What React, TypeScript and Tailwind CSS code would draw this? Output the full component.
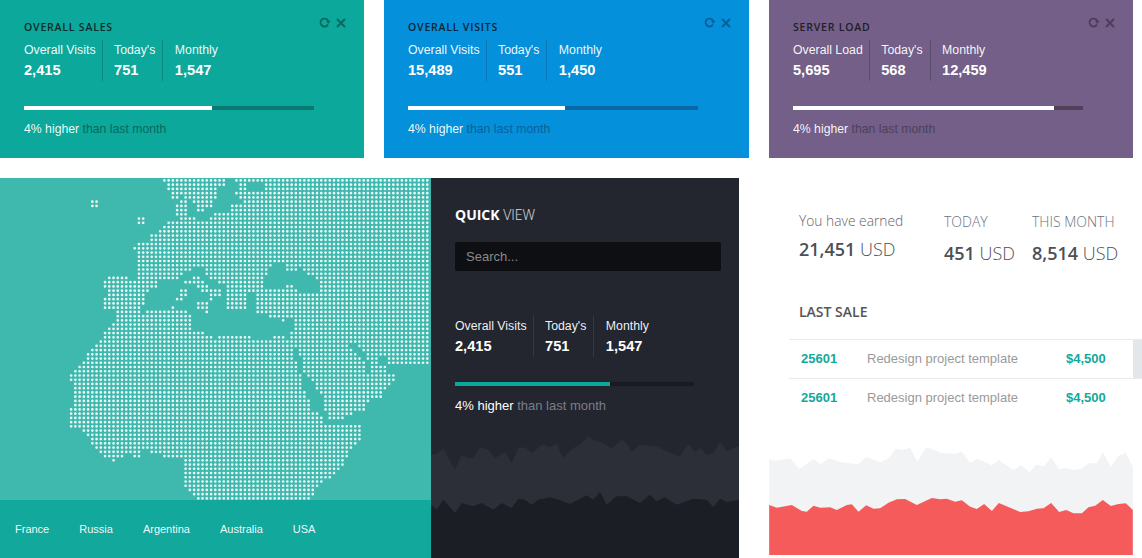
import { ReactNode } from 'react';

type Pt = [number, number];

const SANS = "font-['Liberation_Sans',Arial,sans-serif]";
const OPEN = "font-['Open_Sans',sans-serif]";

// outlines traced off the reference at 3x, y offset 175
const zoomed = (pts: Pt[]): Pt[] => pts.map(([x, y]) => [x / 3, y / 3 + 175 - 178]);
const real = (pts: Pt[]): Pt[] => pts.map(([x, y]) => [x, y - 178]);

const land: Pt[][] = [
  real([
    [233, 176], [432, 176], [432, 365], [388, 365], [386, 373], [394, 374], [398, 381], [389, 385], [381, 397],
    [369, 402], [366, 410], [353, 414], [344, 419], [329, 419], [329, 424], [351, 424], [361, 424], [361, 441],
    [350, 450], [347, 458], [344, 465], [338, 470], [333, 475], [328, 480], [318, 485], [314, 490], [311, 502],
    [197, 502], [192, 494], [188, 490], [184, 486], [184, 459], [163, 458], [162, 455], [150, 454], [149, 450],
    [141, 450], [140, 458], [133, 458], [133, 453], [124, 453], [124, 458], [115, 458], [115, 463], [112, 463],
    [112, 458], [103, 458], [99, 452], [95, 448], [91, 443], [87, 437], [83, 431], [73, 428], [68, 424],
    [68, 409], [73, 405], [73, 385], [68, 380], [68, 378], [74, 372], [78, 366], [86, 359], [86, 352],
    [95, 345], [99, 340], [103, 335], [108, 329], [112, 322], [116, 318], [116, 312], [104, 309], [103, 298],
    [108, 296], [108, 288], [103, 287], [103, 281], [108, 276], [128, 276], [128, 281], [136, 281], [136, 248],
    [132, 249], [132, 246], [136, 244], [149, 243], [149, 235], [157, 232], [162, 227], [166, 222], [208, 222],
    [210, 216], [215, 212], [229, 212], [229, 204], [242, 203], [239, 196], [234, 195], [239, 190], [239, 184],
    [234, 180],
  ]),
  real([
    [162, 176], [221, 176], [226, 184], [217, 190], [217, 198], [212, 207], [203, 208], [203, 213], [196, 213],
    [196, 206], [192, 198], [186, 200], [187, 218], [196, 218], [196, 224], [178, 224], [179, 216], [175, 214],
    [175, 205], [180, 202], [183, 197], [172, 198], [170, 194], [166, 188],
  ]),
];

const seas: Pt[][] = [
  zoomed([
    [432, 350], [468, 345], [470, 316], [525, 316], [540, 305], [590, 278], [612, 278], [612, 302], [650, 318],
    [678, 335], [678, 405], [735, 405], [740, 360], [768, 355], [768, 420], [880, 430], [880, 465], [865, 490],
    [830, 475], [810, 490], [770, 490], [725, 478], [680, 475], [640, 490], [610, 472], [570, 470], [572, 425],
    [560, 405], [445, 405], [420, 418], [432, 385],
  ]),
  zoomed([
    [815, 265], [850, 265], [850, 295], [880, 295], [890, 282], [905, 282], [935, 305], [958, 320], [958, 345],
    [935, 355], [900, 350], [880, 335], [860, 330], [830, 345], [790, 345], [790, 320],
  ]),
  zoomed([[742, 26], [790, 26], [790, 42], [742, 42]]),
  zoomed([[1042, 505], [1065, 505], [1098, 545], [1108, 560], [1108, 600], [1098, 600], [1095, 565], [1060, 530]]),
  zoomed([[1140, 545], [1158, 545], [1158, 568], [1140, 568]]),
  real([
    [293, 350], [298, 350], [303, 370], [311, 380], [315, 385], [319, 392], [323, 395], [323, 410], [329, 418],
    [329, 429], [326, 429], [325, 418], [313, 410], [310, 402], [305, 397], [303, 380], [298, 372],
  ]),
];

const islands: Pt[][] = [
  zoomed([[545, 315], [605, 305], [612, 330], [660, 345], [662, 368], [628, 375], [628, 355], [600, 345], [585, 330], [545, 328]]),
  zoomed([[538, 340], [560, 340], [560, 365], [538, 365]]),
  zoomed([[526, 366], [548, 366], [548, 378], [526, 378]]),
  zoomed([[588, 380], [626, 380], [626, 414], [610, 414], [610, 404], [588, 404]]),
  zoomed([[512, 392], [524, 392], [524, 403], [512, 403]]),
  zoomed([[842, 430], [854, 430], [854, 442], [842, 442]]),
  real([[90, 199], [99, 199], [99, 208], [90, 208]]),
  real([[136, 216], [145, 216], [145, 225], [136, 225]]),
];

const inside = (x: number, y: number, poly: Pt[]) => {
  let hit = false;
  for (let i = 0, j = poly.length - 1; i < poly.length; j = i++) {
    const [xi, yi] = poly[i];
    const [xj, yj] = poly[j];
    if (yi > y !== yj > y && x < ((xj - xi) * (y - yi)) / (yj - yi) + xi) hit = !hit;
  }
  return hit;
};

const buildDots = () => {
  let d = '';
  for (let row = 0; row < 76; row++) {
    for (let col = 0; col < 101; col++) {
      const x = 3.28 + col * 4.24;
      const y = 2.45 + row * 4.24;
      const on =
        (land.some((p) => inside(x, y, p)) && !seas.some((p) => inside(x, y, p))) ||
        islands.some((p) => inside(x, y, p));
      if (on) d += `M${x.toFixed(2)} ${y.toFixed(2)}h.01`;
    }
  }
  return d;
};

const toPath = (pts: Pt[], close: string) => 'M' + pts.map(([x, y]) => `${x} ${y}`).join('L') + close;

const darkBack: Pt[] = [
  [3, 830], [20, 828], [40, 812], [55, 840], [75, 875], [95, 830], [115, 840], [130, 840], [150, 808], [175, 815],
  [195, 840], [225, 822], [245, 855], [265, 810], [285, 808], [305, 825], [340, 798], [360, 808], [380, 795], [398, 840],
  [430, 810], [450, 800], [475, 775], [495, 788], [520, 795], [545, 812], [575, 785], [590, 795], [605, 822], [630, 800],
  [680, 805], [710, 820], [750, 835], [775, 798], [795, 822], [810, 810], [830, 830], [850, 825], [870, 792], [890, 820],
  [927, 803],
];
const darkFront: Pt[] = [
  [3, 980], [20, 995], [40, 965], [75, 1005], [95, 975], [130, 985], [155, 975], [190, 995], [215, 975], [245, 990],
  [265, 962], [285, 965], [305, 980], [325, 965], [360, 958], [385, 965], [420, 978], [470, 952], [490, 965], [510, 942],
  [530, 980], [560, 955], [590, 955], [630, 975], [660, 950], [680, 970], [705, 958], [740, 980], [790, 962], [830, 965],
  [850, 988], [870, 962], [890, 972], [927, 965],
];
const lightBack: Pt[] = [
  [27, 87], [50, 92], [90, 85], [117, 117], [160, 87], [182, 103], [205, 85], [250, 98], [295, 103], [318, 80],
  [360, 97], [385, 85], [405, 57], [428, 60], [450, 53], [472, 95], [497, 52], [515, 56], [540, 68], [585, 72],
  [605, 65], [630, 98], [652, 87], [695, 106], [716, 90], [760, 120], [783, 105], [808, 127], [828, 104], [852, 108],
  [873, 82], [897, 118], [918, 113], [940, 120], [965, 116], [985, 100], [1010, 100], [1028, 66], [1052, 110], [1075, 77],
  [1097, 68], [1118, 112],
];
const lightFront: Pt[] = [
  [27, 225], [50, 233], [95, 225], [125, 243], [140, 245], [160, 227], [180, 233], [210, 232], [230, 240], [260, 225],
  [275, 223], [295, 245], [318, 226], [340, 236], [360, 235], [385, 218], [410, 208], [435, 207], [470, 225], [515, 204],
  [540, 208], [560, 206], [585, 215], [605, 211], [630, 230], [650, 237], [672, 222], [695, 243], [716, 219], [780, 246],
  [805, 244], [830, 236], [850, 235], [873, 219], [897, 246], [918, 240], [940, 250], [965, 250], [985, 232], [1005, 227],
  [1028, 210], [1052, 228], [1075, 222], [1097, 220], [1118, 240],
];

const Stats = ({ first, values, divider }: { first: string; values: string[]; divider: string }) => {
  const labels = [first, "Today's", 'Monthly'];
  return (
    <div className={`flex h-[41px] ${SANS}`}>
      {labels.map((label, i) => (
        <div
          key={label}
          className={`${i === 0 ? 'pr-[6px]' : 'pl-[11.5px] pr-[7px]'} ${i < 2 ? `border-r ${divider}` : ''} pt-[3px]`}
        >
          <div className="text-[12.3px] leading-[14px] text-white/95">{label}</div>
          <div className="mt-[5px] text-[14.6px] font-bold leading-[17px] text-white">{values[i]}</div>
        </div>
      ))}
    </div>
  );
};

const CardIcons = ({ color }: { color: string }) => (
  <div className={`absolute right-[18px] top-[17px] flex items-center gap-[5px] ${color}`}>
    <svg width="12" height="11" viewBox="0 0 12 11" fill="none" stroke="currentColor" strokeWidth="1.8">
      <path d="M9 7.5A4 4 0 1 1 9.2 4" />
      <path d="M7 3.8h4.6L9.3 7z" fill="currentColor" stroke="none" />
    </svg>
    <svg width="10" height="10" viewBox="0 0 10 10" fill="none" stroke="currentColor" strokeWidth="2">
      <path d="M1 1l8 8M9 1l-8 8" />
    </svg>
  </div>
);

interface CardProps {
  title: string;
  first: string;
  values: string[];
  fill: number;
  className: string;
  width: string;
  track: string;
  muted: string;
  divider: string;
  titleColor: string;
}

const Card = ({ title, first, values, fill, className, width, track, muted, divider, titleColor }: CardProps) => (
  <div className={`relative h-[158px] pl-[24px] pt-[20px] ${width} ${className}`}>
    <CardIcons color={muted} />
    <h3 className={`${OPEN} ${titleColor} h-[14px] text-[10.5px] font-semibold uppercase leading-[14px] tracking-[0.8px]`}>
      {title}
    </h3>
    <div className="mt-[6px]">
      <Stats first={first} values={values} divider={divider} />
    </div>
    <div className={`mt-[25px] h-[4px] w-[290px] ${track}`}>
      <div className="h-full bg-white" style={{ width: fill }} />
    </div>
    <p className={`mt-[12px] text-[12.25px] leading-[14px] ${SANS} ${muted}`}>
      <span className="text-white/95">4% higher</span> than last month
    </p>
  </div>
);

const Sale = ({ children }: { children?: ReactNode }) => (
  <div className={`relative flex h-[39px] items-center border-t border-[#e8eaed] pl-[12px] text-[13px] ${SANS}`}>
    <span className="w-[66px] font-bold text-[#13a89c]">25601</span>
    <span className="w-[199px] text-[#9a9a9a]">Redesign project template</span>
    <span className="font-bold text-[#13a89c]">$4,500</span>
    {children}
  </div>
);

export default function App() {
  return (
    <div className="flex h-[558px] w-[1142px] flex-col gap-5 overflow-hidden bg-white">
      <div className="flex gap-5">
        <Card
          title="Overall Sales"
          first="Overall Visits"
          values={['2,415', '751', '1,547']}
          fill={188}
          width="w-[364px]"
          className="bg-[#0ba89b]"
          track="bg-[#0a7a70]"
          muted="text-[#08695f]"
          divider="border-[#0a8a7f]"
          titleColor="text-[#0d2c2e]"
        />
        <Card
          title="Overall Visits"
          first="Overall Visits"
          values={['15,489', '551', '1,450']}
          fill={157}
          width="w-[365px]"
          className="bg-[#0590db]"
          track="bg-[#0a69a3]"
          muted="text-[#08609a]"
          divider="border-[#0a75b5]"
          titleColor="text-[#0d2438]"
        />
        <Card
          title="Server Load"
          first="Overall Load"
          values={['5,695', '568', '12,459']}
          fill={261}
          width="w-[364px]"
          className="bg-[#735f87]"
          track="bg-[#4e4159]"
          muted="text-[#4d3f5c]"
          divider="border-[#5c4c6d]"
          titleColor="text-[#231c2b]"
        />
      </div>

      <div className="flex h-[380px]">
        <div className="flex w-[431px] flex-col bg-[#3fb9ae]">
          <svg width="431" height="322" className="block">
            <path d={buildDots()} stroke="#fff" strokeOpacity="0.9" strokeWidth="2.7" strokeLinecap="round" fill="none" />
          </svg>
          <div className={`flex h-[58px] items-center gap-[30px] bg-[#13a89c] pl-[15px] text-[11px] text-white/95 ${SANS}`}>
            <span>France</span>
            <span>Russia</span>
            <span>Argentina</span>
            <span>Australia</span>
            <span>USA</span>
          </div>
        </div>

        <div className="flex w-[308px] flex-col bg-[#23262f]">
          <div className="pl-[24px] pt-[27px]">
            <h2 className={`${OPEN} text-[14px] leading-[20px] text-white`}>
              <span className="font-bold">QUICK</span> <span className="font-light text-white/85">VIEW</span>
            </h2>
            <input
              placeholder="Search..."
              className={`mt-[17px] block h-[29px] w-[266px] rounded-[2px] bg-[#0e0f13] pl-[11px] text-[13px] text-white outline-none placeholder:text-[#8a8a8a] ${SANS}`}
            />
            <div className="mt-[45px]">
              <Stats first="Overall Visits" values={['2,415', '751', '1,547']} divider="border-[#363943]" />
            </div>
            <div className="mt-[25px] h-[4px] w-[239px] bg-[#191b22]">
              <div className="h-full w-[155px] bg-[#0ba89b]" />
            </div>
            <p className={`mt-[12px] text-[13px] leading-[15px] text-[#7b7e87] ${SANS}`}>
              <span className="text-white">4% higher</span> than last month
            </p>
          </div>
          <svg viewBox="3 750 924 390" width="308" height="130" className="mt-auto block">
            <path d={toPath(darkBack, 'L927 1140L3 1140Z')} fill="#2c2f38" />
            <path d={toPath(darkFront, 'L927 1140L3 1140Z')} fill="#1c1e26" />
          </svg>
        </div>

        <div className="ml-[30px] flex w-[373px] flex-col">
          <div className="flex pl-[30px] pt-[34px]">
            <div className="w-[145px]">
              <div className={`${OPEN} text-[13.8px] font-light leading-[18px] text-[#666]`}>You have earned</div>
              <div className={`${OPEN} mt-[7px] text-[18px] leading-[24px] text-[#4d4f55]`}>
                <span className="font-semibold">21,451</span> <span className="font-light">USD</span>
              </div>
            </div>
            <div className="w-[88px] pt-[1px]">
              <div className={`${OPEN} text-[14px] font-light leading-[18px] text-[#6b7280]`}>TODAY</div>
              <div className={`${OPEN} mt-[10px] text-[18px] leading-[24px] text-[#4d4f55]`}>
                <span className="font-semibold">451</span> <span className="font-light">USD</span>
              </div>
            </div>
            <div className="pt-[1px]">
              <div className={`${OPEN} text-[14px] font-light leading-[18px] text-[#6b7280]`}>THIS MONTH</div>
              <div className={`${OPEN} mt-[10px] text-[18px] leading-[24px] text-[#4d4f55]`}>
                <span className="font-semibold">8,514</span> <span className="font-light">USD</span>
              </div>
            </div>
          </div>
          <h3 className={`${OPEN} mt-[38px] pl-[30px] text-[14px] font-semibold leading-[18px] text-[#555]`}>LAST SALE</h3>
          <div className="ml-[20px] mt-[18px]">
            <Sale>
              <div className="absolute right-0 top-0 h-full w-[9px] bg-[#e4e7ea]" />
            </Sale>
            <Sale />
          </div>
          <svg viewBox="27 0 1091 375" width="364" height="125" className="mb-[3px] mt-auto block">
            <path d={toPath(lightBack, 'L1118 375L27 375Z')} fill="#f2f3f5" />
            <path d={toPath(lightFront, 'L1118 375L27 375Z')} fill="#f55b5b" />
          </svg>
        </div>
      </div>
    </div>
  );
}
